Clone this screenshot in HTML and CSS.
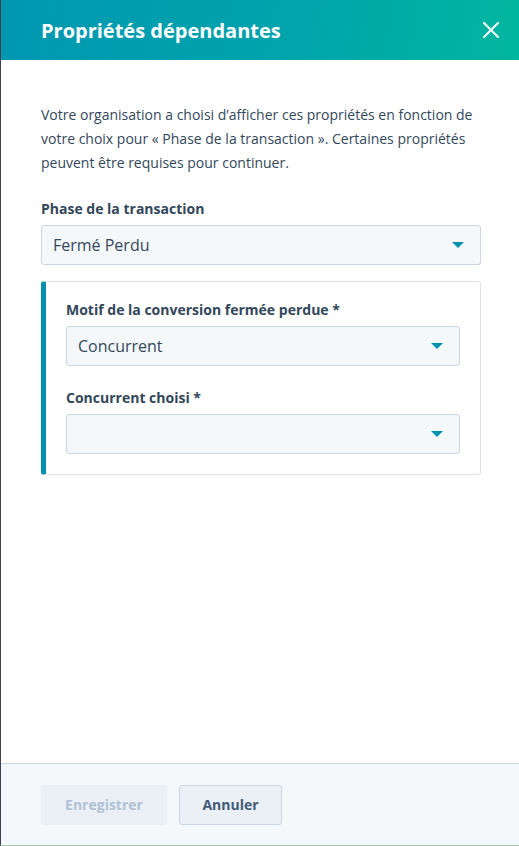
FILE: index.html
```html
<!DOCTYPE html>
<html lang="fr">
<head>
    <meta charset="UTF-8">
    <title>Propriétés dépendantes</title>
    <link rel="stylesheet" href="styles.css">
</head>
<body>
    <div class="panel">
        <!-- En-tête du panneau -->
        <header class="panel-header">
            <h1>Propriétés dépendantes</h1>
            <button class="close-btn" aria-label="Fermer">
                <svg width="16" height="16" viewBox="0 0 16 16">
                    <path d="M1 1 L15 15 M15 1 L1 15" stroke="#fff" stroke-width="2" stroke-linecap="round"/>
                </svg>
            </button>
        </header>

        <!-- Contenu -->
        <div class="panel-body">
            <p class="intro">Votre organisation a choisi d’afficher ces propriétés en fonction de votre choix pour « Phase de la transaction ». Certaines propriétés peuvent être requises pour continuer.</p>

            <div class="field">
                <label>Phase de la transaction</label>
                <div class="select">
                    <span>Fermé Perdu</span>
                    <span class="caret"></span>
                </div>
            </div>

            <div class="dependent">
                <div class="field">
                    <label>Motif de la conversion fermée perdue *</label>
                    <div class="select">
                        <span>Concurrent</span>
                        <span class="caret"></span>
                    </div>
                </div>
                <div class="field">
                    <label>Concurrent choisi *</label>
                    <div class="select">
                        <span></span>
                        <span class="caret"></span>
                    </div>
                </div>
            </div>
        </div>

        <!-- Pied de page -->
        <footer class="panel-footer">
            <button class="btn btn-disabled" disabled>Enregistrer</button>
            <button class="btn btn-secondary">Annuler</button>
        </footer>
    </div>
</body>
</html>
```

FILE: styles.css
```css
/* Base */
html, body {
    margin: 0;
    height: 100%;
}

body {
    font-family: "Open Sans", Arial, sans-serif;
    color: #33475b;
    background: #fff;
}

/* Panneau principal */
.panel {
    height: 846px;
    box-sizing: border-box;
    display: flex;
    flex-direction: column;
    border-left: 1px solid #3d4150;
    border-bottom: 1px solid #a6c9a6;
}

/* En-tête */
.panel-header {
    height: 60px;
    flex-shrink: 0;
    display: flex;
    align-items: center;
    justify-content: space-between;
    padding: 0 20px 0 40px;
    background: linear-gradient(100deg, #0097b1 0%, #00a4ac 55%, #00b69f 100%);
}

.panel-header h1 {
    margin: 0;
    color: #fff;
    font-size: 20px;
    font-weight: 700;
}

.close-btn {
    background: none;
    border: none;
    padding: 0;
    width: 16px;
    height: 16px;
    cursor: pointer;
    display: flex;
}

/* Corps */
.panel-body {
    flex: 1;
    padding: 43px 38px 0 40px;
}

.intro {
    margin: 0 0 24px;
    font-size: 14px;
    line-height: 24px;
}

.field label {
    display: block;
    font-size: 14px;
    font-weight: 700;
    margin-bottom: 7px;
}

.select {
    height: 40px;
    box-sizing: border-box;
    display: flex;
    align-items: center;
    justify-content: space-between;
    padding: 0 16px 0 11px;
    background: #f5f8fa;
    border: 1px solid #cbd6e2;
    border-radius: 3px;
    font-size: 16px;
    color: #33475b;
}

.caret {
    width: 0;
    height: 0;
    border-left: 6px solid transparent;
    border-right: 6px solid transparent;
    border-top: 6px solid #0091ae;
}

/* Bloc des propriétés dépendantes */
.dependent {
    margin-top: 16px;
    border: 1px solid #dfe3eb;
    border-left: 5px solid #0091ae;
    border-radius: 3px;
    padding: 18px 20px 20px 20px;
}

.dependent .field + .field {
    margin-top: 22px;
}

/* Pied de page */
.panel-footer {
    height: 82px;
    flex-shrink: 0;
    box-sizing: border-box;
    display: flex;
    align-items: center;
    gap: 12px;
    padding: 0 40px;
    background: #f5f8fa;
    border-top: 1px solid #cbd6e2;
}

.btn {
    height: 40px;
    border-radius: 3px;
    font-family: inherit;
    font-size: 14px;
    font-weight: 700;
    cursor: pointer;
}

.btn-disabled {
    width: 126px;
    background: #eaf0f6;
    border: 1px solid #eaf0f6;
    color: #b0c1d4;
    cursor: not-allowed;
}

.btn-secondary {
    width: 103px;
    background: #eaf0f6;
    border: 1px solid #cbd6e2;
    color: #425b76;
}
```
